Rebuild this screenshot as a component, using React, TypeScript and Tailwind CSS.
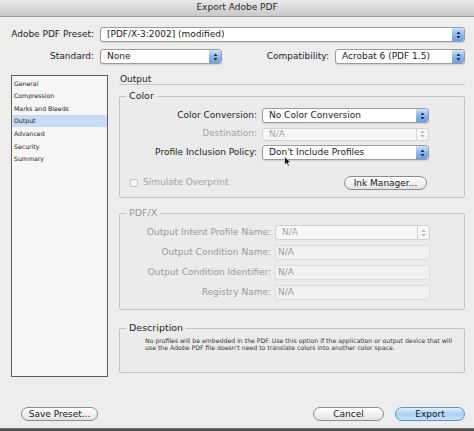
import React from 'react'

function Stepper({ disabled }: { disabled?: boolean }) {
  return (
    <div
      className={
        disabled
          ? 'w-[12px] h-full flex items-center justify-center border-l border-[#d4d4d4]'
          : 'w-[12px] h-full flex items-center justify-center rounded-r-[3px] bg-gradient-to-b from-[#cfe2f8] via-[#8db8ea] to-[#6aa0e0]'
      }
    >
      <svg width="5" height="8" viewBox="0 0 5 8">
        <path d="M2.5 0.5 L4.5 3 L0.5 3 Z" fill={disabled ? '#b5b5b5' : '#1c2a44'} />
        <path d="M2.5 7.5 L4.5 5 L0.5 5 Z" fill={disabled ? '#b5b5b5' : '#1c2a44'} />
      </svg>
    </div>
  )
}

function Select({ value, disabled, className }: { value: string; disabled?: boolean; className: string }) {
  return (
    <div
      className={`flex items-center rounded-[3px] border ${
        disabled ? 'border-[#d0d0d0] bg-[#f7f7f7] text-[#a6a6a6]' : 'border-[#9c9c9c] bg-white text-[#1a1a1a] shadow-[0_1px_1px_rgba(0,0,0,0.12)]'
      } ${className}`}
    >
      <span className="flex-1 pl-[6px] leading-none truncate">{value}</span>
      <Stepper disabled={disabled} />
    </div>
  )
}

function Field({ value }: { value: string }) {
  return (
    <div className="w-[155px] h-[15px] flex items-center pl-[2px] border border-[#dedede] bg-[#f1f1f1] text-[#9a9a9a] leading-none">
      {value}
    </div>
  )
}

function Button({ label, primary, className }: { label: string; primary?: boolean; className: string }) {
  return (
    <div
      className={`h-[14px] flex items-center justify-center rounded-full border leading-none text-[#1a1a1a] ${
        primary
          ? 'border-[#5f8fc6] bg-gradient-to-b from-[#e4f1fc] via-[#a9d1f2] to-[#c6e2f8]'
          : 'border-[#8c8c8c] bg-gradient-to-b from-white via-[#f1f1f1] to-[#e2e2e2]'
      } ${className}`}
    >
      {label}
    </div>
  )
}

const sections = ['General', 'Compression', 'Marks and Bleeds', 'Output', 'Advanced', 'Security', 'Summary']

export default function App() {
  return (
    <div className="w-[474px] h-[431px] bg-[#ededed] font-['DejaVu_Sans',sans-serif] text-[9px] text-[#1e1e1e] flex flex-col overflow-hidden relative">
      {/* Title bar */}
      <div className="h-[17px] shrink-0 flex items-center justify-center bg-gradient-to-b from-[#e9e9e9] to-[#c9c9c9] border-b border-[#9a9a9a] text-[#2a2a2a]">
        Export Adobe PDF
      </div>

      {/* Preset */}
      <div className="mt-[10px] h-[15px] flex items-center">
        <div className="w-[95px] text-right pr-[1px]">Adobe PDF Preset:</div>
        <Select value="[PDF/X-3:2002] (modified)" className="ml-[5px] w-[365px] h-[15px]" />
      </div>

      {/* Standard / Compatibility */}
      <div className="mt-[7px] h-[15px] flex items-center">
        <div className="w-[95px] text-right pr-[1px]">Standard:</div>
        <Select value="None" className="ml-[5px] w-[122px] h-[15px]" />
        <div className="w-[108px] text-right pr-[1px]">Compatibility:</div>
        <Select value="Acrobat 6 (PDF 1.5)" className="ml-[5px] w-[130px] h-[15px]" />
      </div>

      {/* Main area */}
      <div className="mt-[11px] flex h-[302px]">
        <div className="ml-[11px] w-[97px] h-full border border-[#5e5e5e] bg-[#f6f6f6] pt-[1px] text-[6.2px] text-[#222]">
          {sections.map((s) => (
            <div
              key={s}
              className={`h-[12.6px] flex items-center pl-[2px] ${s === 'Output' ? 'bg-[#c7dcf4]' : ''}`}
            >
              {s}
            </div>
          ))}
        </div>

        <div className="ml-[11px] w-[346px] flex flex-col">
          <div className="h-[10px] border-b border-[#c6c6c6] leading-none pl-[1px] text-[#222]">Output</div>

          {/* Color */}
          <fieldset className="mt-[6px] border border-[#c4c4c4] rounded-[2px] bg-[#ebebeb] pb-[7px]">
            <legend className="ml-[6px] px-[3px] text-[9.5px] leading-[10px]">Color</legend>
            <div className="mt-[7px] flex flex-col gap-[4px]">
              <div className="h-[15px] flex items-center">
                <div className="w-[137px] text-right">Color Conversion:</div>
                <Select value="No Color Conversion" className="ml-[5px] w-[167px] h-[15px]" />
              </div>
              <div className="h-[14px] flex items-center">
                <div className="w-[137px] text-right text-[#a3a3a3]">Destination:</div>
                <Select value="N/A" disabled className="ml-[5px] w-[167px] h-[13px]" />
              </div>
              <div className="h-[15px] flex items-center">
                <div className="w-[137px] text-right">Profile Inclusion Policy:</div>
                <Select value="Don't Include Profiles" className="ml-[5px] w-[167px] h-[15px]" />
              </div>
            </div>
            <div className="mt-[16px] h-[14px] flex items-center">
              <div className="ml-[10px] w-[8px] h-[8px] border border-[#c2c2c2] bg-[#f6f6f6] rounded-[1px]" />
              <div className="ml-[5px] text-[#a3a3a3]">Simulate Overprint</div>
              <Button label="Ink Manager..." className="ml-auto mr-[37px] w-[83px]" />
            </div>
          </fieldset>

          {/* PDF/X */}
          <fieldset className="mt-[10px] border border-[#c4c4c4] rounded-[2px] bg-[#ebebeb] pb-[9px] text-[#9a9a9a]">
            <legend className="ml-[6px] px-[3px] text-[9.5px] leading-[10px]">PDF/X</legend>
            <div className="mt-[7px] flex flex-col gap-[5px]">
              <div className="h-[15px] flex items-center">
                <div className="w-[151px] text-right">Output Intent Profile Name:</div>
                <Select value="N/A" disabled className="ml-[4px] w-[155px] h-[15px]" />
              </div>
              <div className="h-[15px] flex items-center">
                <div className="w-[151px] text-right">Output Condition Name:</div>
                <div className="ml-[4px]"><Field value="N/A" /></div>
              </div>
              <div className="h-[15px] flex items-center">
                <div className="w-[151px] text-right">Output Condition Identifier:</div>
                <div className="ml-[4px]"><Field value="N/A" /></div>
              </div>
              <div className="h-[15px] flex items-center">
                <div className="w-[151px] text-right">Registry Name:</div>
                <div className="ml-[4px]"><Field value="N/A" /></div>
              </div>
            </div>
          </fieldset>

          {/* Description */}
          <fieldset className="mt-[13px] h-[50px] border border-[#c4c4c4] rounded-[2px] bg-[#ebebeb]">
            <legend className="ml-[6px] px-[3px] text-[9.5px] leading-[10px]">Description</legend>
            <div className="mt-[4px] pl-[25px] pr-[4px] text-[6.2px] leading-[7px] text-[#333]">
              No profiles will be embedded in the PDF. Use this option if the application or output device that will
              use the Adobe PDF file doesn't need to translate colors into another color space.
            </div>
          </fieldset>
        </div>
      </div>

      {/* Bottom buttons */}
      <div className="mt-[30px] h-[14px] flex items-center">
        <Button label="Save Preset..." className="ml-[21px] w-[77px]" />
        <Button label="Cancel" className="ml-auto w-[71px]" />
        <Button label="Export" primary className="ml-[11px] mr-[9px] w-[70px]" />
      </div>

      <div className="mt-auto h-[3px] bg-gradient-to-b from-[#777] to-[#3c3c3c]" />

      {/* Mouse pointer */}
      <svg className="absolute left-[284px] top-[156px]" width="8" height="11" viewBox="0 0 8 11">
        <path d="M0.5 0.5 L0.5 9 L2.6 7.1 L4 10.3 L5.4 9.7 L4 6.6 L6.8 6.6 Z" fill="#111" stroke="#fff" strokeWidth="0.7" />
      </svg>
    </div>
  )
}
